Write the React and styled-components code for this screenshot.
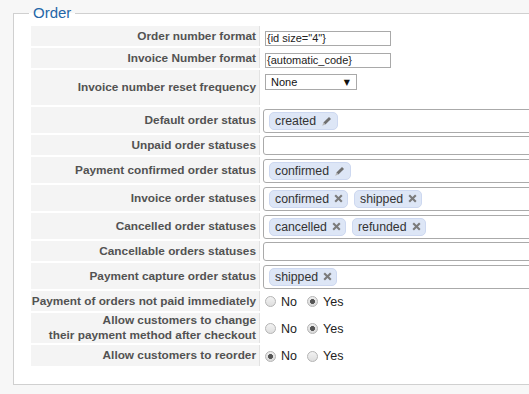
import React from 'react'
import styled, { createGlobalStyle } from 'styled-components'

const GlobalStyle = createGlobalStyle`
  html, body {
    margin: 0;
    padding: 0;
    background: #f7f7f7;
    overflow: hidden;
    font-family: "Liberation Sans", Arial, sans-serif;
  }
`

const rows = [
  { label: 'Order number format', h: 20, type: 'input', value: '{id size="4"}' },
  { label: 'Invoice Number format', h: 20, type: 'input', value: '{automatic_code}' },
  { label: 'Invoice number reset frequency', h: 35, type: 'select', value: 'None' },
  { label: 'Default order status', h: 26, type: 'tags', tags: ['created'], edit: true },
  { label: 'Unpaid order statuses', h: 20, type: 'tags', tags: [] },
  { label: 'Payment confirmed order status', h: 26, type: 'tags', tags: ['confirmed'], edit: true },
  { label: 'Invoice order statuses', h: 26, type: 'tags', tags: ['confirmed', 'shipped'] },
  { label: 'Cancelled order statuses', h: 26, type: 'tags', tags: ['cancelled', 'refunded'] },
  { label: 'Cancellable orders statuses', h: 20, type: 'tags', tags: [] },
  { label: 'Payment capture order status', h: 26, type: 'tags', tags: ['shipped'] },
  { label: 'Payment of orders not paid immediately', h: 20, type: 'radio', yes: true },
  { label: ['Allow customers to change', 'their payment method after checkout'], h: 30, type: 'radio', yes: true },
  { label: 'Allow customers to reorder', h: 21, type: 'radio', yes: false },
]

const Pencil = () => (
  <svg width="12" height="12" viewBox="0 0 12 12">
    <path d="M2.4 7.6 L8 2 L10 4 L4.4 9.6 Z" fill="#6f6f6f" />
    <path d="M2.4 7.6 L1.2 10.8 L4.4 9.6 Z" fill="#b5b5b5" />
  </svg>
)

const Cross = () => (
  <svg width="9" height="9" viewBox="0 0 9 9">
    <path d="M1.2 1.2 L7.8 7.8 M7.8 1.2 L1.2 7.8" stroke="#7b7b7b" strokeWidth="2.1" />
  </svg>
)

const Field = ({ row }) => {
  if (row.type === 'input') return <TextInput>{row.value}</TextInput>
  if (row.type === 'select')
    return (
      <SelectBox>
        <span>{row.value}</span>
        <Arrow>▼</Arrow>
      </SelectBox>
    )
  if (row.type === 'radio')
    return (
      <Radios>
        <Radio $checked={!row.yes} />
        <RadioText>No</RadioText>
        <Radio $checked={row.yes} />
        <RadioText>Yes</RadioText>
      </Radios>
    )
  return (
    <TagBox $empty={row.tags.length === 0}>
      {row.tags.map((t) => (
        <Tag key={t}>
          {t}
          {row.edit ? <Pencil /> : <Cross />}
        </Tag>
      ))}
    </TagBox>
  )
}

export default function App() {
  return (
    <Page>
      <GlobalStyle />
      <Fieldset>
        <Legend>Order</Legend>
        <Table>
          <tbody>
            {rows.map((row, i) => (
              <tr key={i}>
                <Label $h={row.h}>
                  {Array.isArray(row.label)
                    ? row.label.map((l) => <div key={l}>{l}</div>)
                    : row.label}
                </Label>
                <Cell $top={row.type === 'input' || row.type === 'select'}>
                  <Field row={row} />
                </Cell>
              </tr>
            ))}
          </tbody>
        </Table>
      </Fieldset>
    </Page>
  )
}

const Page = styled.div`
  padding: 5px 0 0 13px;
`

const Fieldset = styled.fieldset`
  width: 600px;
  margin: 0;
  padding: 3px 0 16px 15px;
  border: 1px solid #d0d0d0;
  background: #fff;
  box-sizing: border-box;
`

const Legend = styled.legend`
  padding: 0 4px;
  font-size: 15px;
  line-height: 16px;
  color: #2566a8;
`

const Table = styled.table`
  width: 100%;
  border-collapse: separate;
  border-spacing: 2px;
`

const Label = styled.td`
  width: 225px;
  height: ${(p) => p.$h}px;
  padding: 0 3px 0 0;
  background: #f4f4f4;
  border-right: 1px solid #e2e2e2;
  text-align: right;
  vertical-align: middle;
  font-size: 11.8px;
  font-weight: bold;
  line-height: 15px;
  color: #525252;
  white-space: nowrap;
`

const Cell = styled.td`
  padding: 1px 0 0 1px;
  vertical-align: ${(p) => (p.$top ? 'top' : 'middle')};
`

const TextInput = styled.div`
  width: 126px;
  height: 15px;
  margin: 4px 0 0 2px;
  padding: 0 1px;
  box-sizing: border-box;
  border: 1px solid #a9a9a9;
  font-size: 11px;
  line-height: 13px;
  color: #222;
  white-space: nowrap;
`

const SelectBox = styled.div`
  width: 92px;
  height: 16px;
  margin: 3px 0 0 2px;
  padding: 0 6px 0 5px;
  box-sizing: border-box;
  border: 1px solid #a9a9a9;
  display: flex;
  align-items: center;
  justify-content: space-between;
  font-size: 11px;
  color: #111;
`

const Arrow = styled.span`
  font-family: "DejaVu Sans", sans-serif;
  font-size: 8px;
`

const TagBox = styled.div`
  height: ${(p) => (p.$empty ? 19 : 24)}px;
  padding: 0 5px;
  box-sizing: border-box;
  border: 1px solid #aaa;
  border-radius: 3px;
  display: flex;
  align-items: center;
  gap: 6px;
`

const Tag = styled.span`
  height: 18px;
  padding: 0 4px 0 5px;
  box-sizing: border-box;
  border: 1px solid #cdd8f0;
  border-radius: 5px;
  background: #dde6f6;
  display: inline-flex;
  align-items: center;
  gap: 5px;
  font-size: 12.3px;
  color: #333;
`

const Radios = styled.div`
  display: flex;
  align-items: center;
  padding-left: 2px;
`

const Radio = styled.span`
  width: 11px;
  height: 11px;
  box-sizing: border-box;
  border-radius: 50%;
  border: 1px solid #b4b4b4;
  background: ${(p) =>
    p.$checked
      ? 'radial-gradient(circle at 50% 50%, #555 0 2.2px, transparent 2.7px), linear-gradient(#eee, #d8d8d8)'
      : 'linear-gradient(#f2f2f2, #dedede)'};
`

const RadioText = styled.span`
  margin: 0 10px 0 5px;
  font-size: 12.5px;
  color: #222;
`
